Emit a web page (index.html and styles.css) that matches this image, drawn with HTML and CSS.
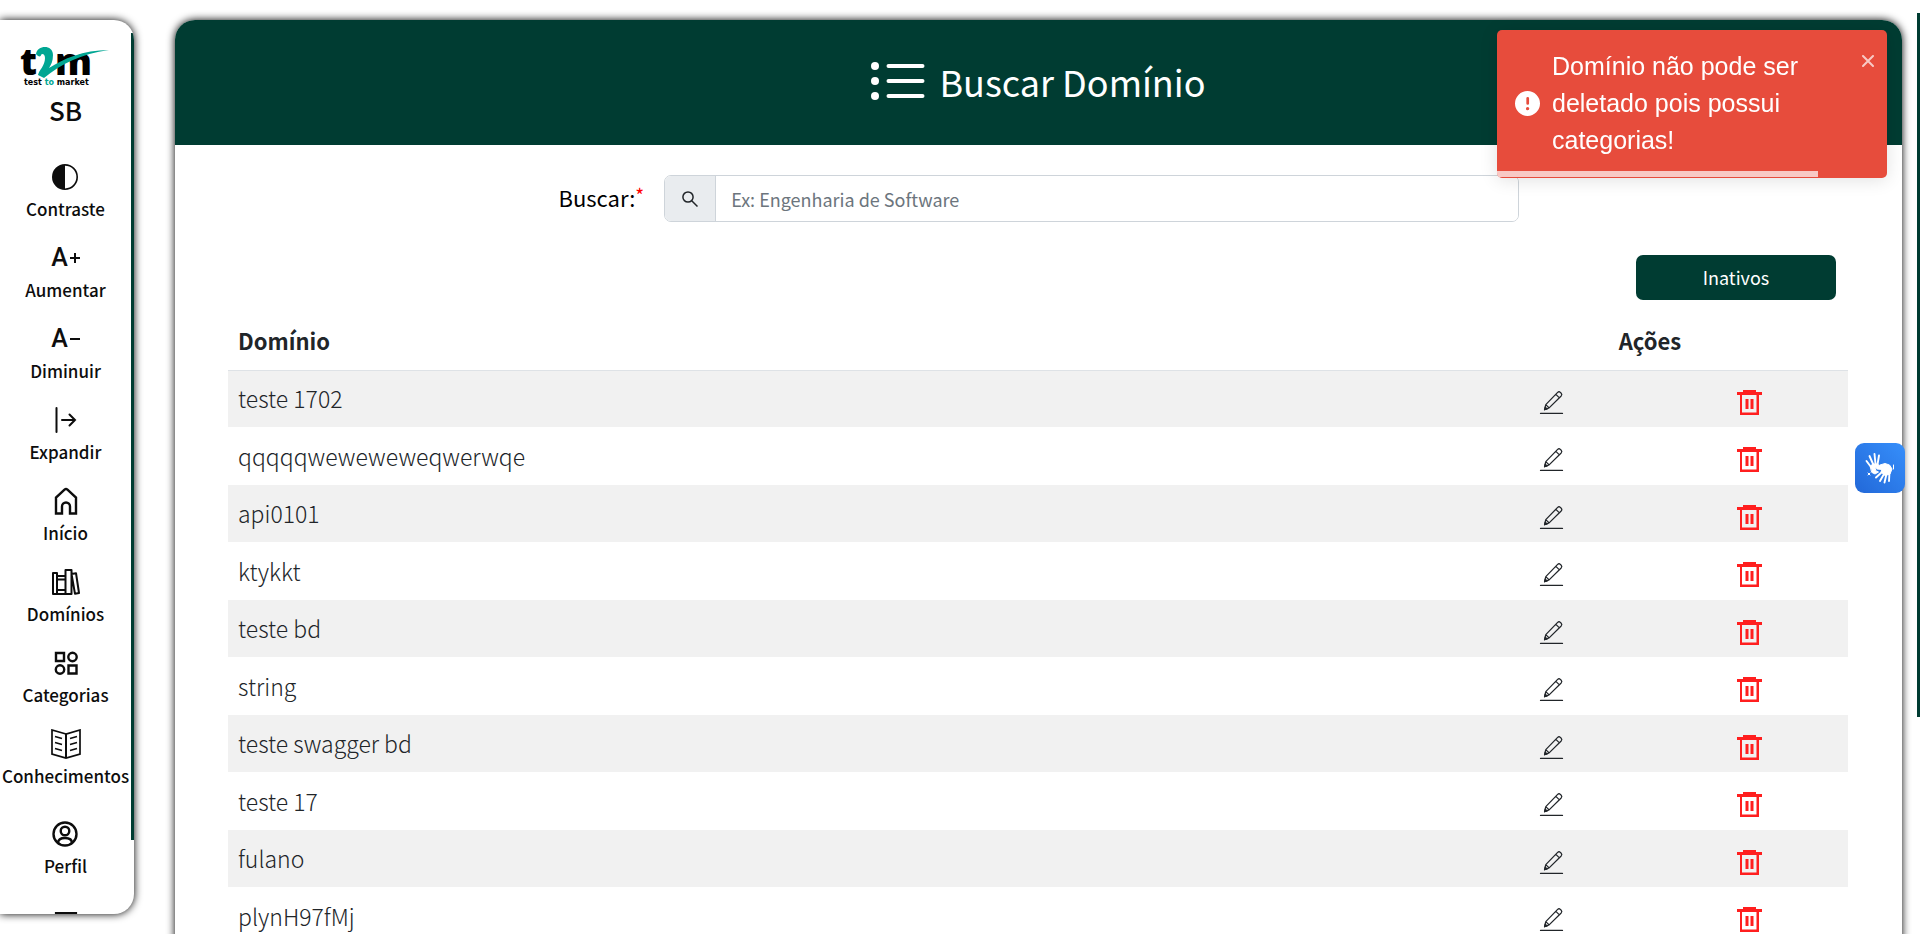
FILE: index.html
```html
<!DOCTYPE html>
<html lang="pt-BR">
<head>
<meta charset="utf-8">
<title>Buscar Domínio</title>
<link rel="stylesheet" href="styles.css">
</head>
<body>
<svg class="defs" aria-hidden="true">
  <symbol id="edit" viewBox="0 0 24 24" fill="none" stroke="currentColor" stroke-linecap="round" stroke-linejoin="round">
    <path d="M1.500 22.500h21" stroke-width="1.300"/>
    <path d="M5.300 19l1.200-5L17.900 2.300q1.300-1.200 2.600 0l.8.800q1.200 1.300 0 2.600L9.700 17.200zM16.200 4.200l3.400 3.400M6.500 14l3.200 3.200" stroke-width="1.200"/>
    <path d="M5.300 19l.6-2.700l2 2z" fill="currentColor"/>
  </symbol>
  <symbol id="trash" viewBox="0 0 25 25">
    <path d="M6 0h13v2h6v3h-3v20H3V5H0V2h6zM5 5v17.500h14.500V5zM8.500 9H11.500v10H8.500zM13.500 9h3v10h-3z" fill="currentColor" fill-rule="evenodd"/>
  </symbol>
</svg>
<div class="page">
  <nav class="sidebar">
    <a class="brand" href="#">
      <svg class="logo" viewBox="0 0 90 42" role="img" aria-label="t2m test to market">
        <text class="logo-letter" x="-1" y="29">t</text>
        <text class="logo-letter" x="34" y="29">m</text>
        <path d="M15 8C16-1 32-2 32 9C32 15 30 19 28 22C42 13 62 4 88 4C60 8 40 18 23 32L17 29C18 24 24 20 24 12C24 8 21 7 20 9C20 11 17 11 15 8Z" fill="#00a693"/>
        <text class="logo-sub" x="3" y="39">test <tspan class="logo-to">to</tspan> market</text>
      </svg>
    </a>
    <span class="initials">SB</span>
    <div class="menu">
      <button class="item" type="button">
        <svg class="icon" viewBox="0 0 16 16"><path fill="currentColor" d="M8 15A7 7 0 1 0 8 1zm0 1A8 8 0 1 1 8 0a8 8 0 0 1 0 16"/></svg>
        <span>Contraste</span></button>
      <button class="item" type="button">
        <span class="icon letter">A<svg viewBox="0 0 10 10" width="10" height="10"><path d="M0 5h10M5 0v10" stroke="currentColor" stroke-width="2"/></svg></span>
        <span>Aumentar</span></button>
      <button class="item" type="button">
        <span class="icon letter">A<svg viewBox="0 0 10 10" width="10" height="10"><path d="M0 5h10" stroke="currentColor" stroke-width="2"/></svg></span>
        <span>Diminuir</span></button>
      <button class="item" type="button">
        <svg class="icon" viewBox="0 0 26 26" fill="none" stroke="currentColor" stroke-width="2" stroke-linecap="round"><path d="M4.500 1v24" /><path d="M10 13h13M17.500 7.500L23 13l-5.500 5.500"/></svg>
        <span>Expandir</span></button>
      <a class="item" href="#">
        <svg class="icon tall" viewBox="0 0 26 28" fill="none" stroke="currentColor" stroke-width="2.400"><path d="M3 26.500V10.500L11.500 2.600q1.500-1.200 3 0L23 10.500V26.500h-6v-7a4 4 0 0 0-8 0V26.500z"/></svg>
        <span>Início</span></a>
      <a class="item" href="#">
        <svg class="icon wide" viewBox="0 0 28 26" fill="none" stroke="currentColor" stroke-width="2" stroke-linejoin="round"><path d="M1 4h4V25H1zM5 7h8.500v18H5zM5 10.500h8.500M5 21h8.500M13.500 1h6v24h-6zM19.500 5l4.500-.8L27 24l-4 .8z"/></svg>
        <span>Domínios</span></a>
      <a class="item" href="#">
        <svg class="icon" viewBox="0 0 26 26" fill="none" stroke="currentColor" stroke-width="2.400"><path d="M3 3h8v8H3zM15.500 15.500h8v8h-8z"/><circle cx="19.500" cy="7" r="4.200"/><circle cx="7" cy="19.500" r="4.200"/></svg>
        <span>Categorias</span></a>
      <a class="item" href="#">
        <svg class="icon book" viewBox="0 0 30 30" fill="none" stroke="currentColor" stroke-width="1.700"><path d="M15 5L1 1v24l14 4l14-4V1zM4 7.500l7 2M4 13.500l7 2M4 19.500l7 2M26 7.500l-7 2M26 13.500l-7 2M26 19.500l-7 2"/><path d="M15 5v24" stroke-width="2"/></svg>
        <span>Conhecimentos</span></a>
      <a class="item spaced" href="#">
        <svg class="icon" viewBox="0 0 26 26" fill="none" stroke="currentColor" stroke-width="2.400"><circle cx="13" cy="13" r="11.500"/><circle cx="13" cy="10" r="4.300"/><path d="M6 22q0-5 7-5t7 5"/></svg>
        <span>Perfil</span></a>
      <a class="item spaced" href="#" aria-label="Sair">
        <svg class="icon" viewBox="0 0 26 26" fill="none" stroke="currentColor" stroke-width="2.200"><path d="M23 9V2H3v22h20v-7M10 13h15"/></svg></a>
    </div>
    <div class="side-thumb"></div>
  </nav>

  <main class="card">
    <header class="card-header">
      <svg class="list-icon" viewBox="0 0 54 38" fill="none" stroke="currentColor" stroke-width="4" stroke-linecap="round"><path d="M17.500 4h34M17.500 19h34M17.500 34h34"/><g fill="currentColor" stroke="none"><circle cx="4" cy="4" r="4"/><circle cx="4" cy="19" r="4"/><circle cx="4" cy="34" r="4"/></g></svg>
      <h1>Buscar Domínio</h1>
    </header>
    <form class="search">
      <label for="q">Buscar:<span class="required">*</span></label>
      <div class="group">
        <span class="addon"><svg viewBox="0 0 16 16" width="16" height="16" fill="none" stroke="currentColor" stroke-width="1.500"><circle cx="6" cy="6" r="5.100"/><path d="M9.700 9.700L15.500 15.500"/></svg></span>
        <input id="q" type="text" placeholder="Ex: Engenharia de Software">
      </div>
    </form>
    <div class="toolbar"><button class="primary" type="button">Inativos</button></div>
    <table class="table">
      <thead><tr><th class="name">Domínio</th><th class="actions" colspan="2">Ações</th></tr></thead>
      <tbody id="rows"></tbody>
    </table>
  </main>
</div>

<div class="page-thumb"></div>
<button class="libras" type="button" aria-label="Acessível em Libras">
  <svg viewBox="0 0 30 32" width="30" height="32" fill="none" stroke="#fff" stroke-linecap="round" stroke-linejoin="round">
    <path d="M1.500 9L6 15M4.500 4l4 9M9.500 2l1 10M14 3.500l-1.500 9" stroke-width="1.900"/>
    <path d="M5.500 14.500l2-2.500h5.500l.5 2-3.500 2 1 3 2.500 1-3.500 2-3-1.500z" fill="#fff" stroke-width="1"/>
    <path d="M11 15.500l4-2.500 5-1.500 4.500 1.500 2.500 4-2 5-5 1.500-4-3.500 1-2.500-5-.5z" fill="#fff" stroke-width="1"/>
    <path d="M17 20l-6 5.500M19 22l-4 7M21.500 22l-2 8.500M24.500 20l-.5 9" stroke-width="1.900"/>
    <path d="M28.500 13v4M3 21l2 2M5 21l-2 2" stroke-width="1"/>
  </svg>
</button>
<div class="toast" role="alert">
  <svg class="toast-icon" viewBox="0 0 24 24" fill="currentColor"><path d="M12 0a12 12 0 1 0 12 12A12 12 0 0 0 12 0zm.2 18.500a1.600 1.600 0 1 1 1.500-1.600a1.500 1.500 0 0 1-1.500 1.600zm1.300-6.500a1.300 1.300 0 0 1-2.600 0V7a1.300 1.300 0 0 1 2.600 0z"/></svg>
  <p>Domínio não pode ser deletado pois possui categorias!</p>
  <button class="close" type="button" aria-label="Fechar"><svg viewBox="0 0 12 12" width="12" height="12"><path d="M1 1l10 10M11 1L1 11" stroke="currentColor" stroke-width="2" stroke-linecap="round"/></svg></button>
  <div class="progress"></div>
</div>
<script src="script.js"></script>
</body>
</html>
```
FILE: styles.css
```css
* { box-sizing: border-box; }
body {
  margin: 0;
  background: #fff;
  color: #212529;
  font-family: "Noto Sans CJK JP", "Noto Sans", sans-serif;
}
button, input { font: inherit; }
.defs { display: none; }
.page {
  display: flex;
  align-items: flex-start;
  gap: 41px;
  height: 100vh;
  padding: 20px 18px 0 0;
  overflow: hidden;
}
.sidebar {
  position: relative;
  display: flex;
  flex: none;
  flex-direction: column;
  align-items: center;
  width: 134px;
  height: calc(100vh - 40px);
  padding: 26px 3px 0 0;
  overflow: hidden;
  border-radius: 0 20px 20px 0;
  box-shadow: 0 0 8px #000;
  color: #0d0d0d;
}
.side-thumb {
  position: absolute;
  top: 13px;
  right: 0;
  bottom: 74px;
  width: 3px;
  background: #003c32;
}
.brand, .logo { display: block; }
.logo { width: 90px; height: 42px; overflow: visible; }
.logo-letter { font: 800 37px "Open Sans", sans-serif; fill: #000; }
.logo-sub { font: bold 8px "DejaVu Sans", sans-serif; fill: #000; }
.logo-to { fill: #00a693; }
.initials { font-size: 26px; font-weight: 500; line-height: 44px; }
.menu {
  display: flex;
  flex-direction: column;
  align-items: center;
  padding-top: 30px;
}
.item {
  display: flex;
  flex: none;
  flex-direction: column;
  align-items: center;
  gap: 2px;
  height: 81px;
  padding: 0;
  border: 0;
  background: none;
  color: inherit;
  font-size: 18px;
  font-weight: 500;
  line-height: 30px;
  text-decoration: none;
}
.item span:last-child { font-size: 17px; }
.spaced { margin-top: 9px; }
.icon { width: 26px; height: 30px; padding: 2px 0; }
.wide { width: 28px; }
.book { width: 30px; padding: 0; }
.tall { padding: 1px 0; }
.letter {
  display: flex;
  align-items: center;
  justify-content: center;
  gap: 2px;
  font: 500 25px/26px Roboto, sans-serif;
}
.letter svg { flex: none; }
.card {
  flex: 1;
  min-width: 0;
  min-height: 1300px;
  overflow: hidden;
  border-radius: 20px 20px 0 0;
  box-shadow: 0 0 8px #000;
}
.card-header {
  display: flex;
  align-items: center;
  justify-content: center;
  gap: 14px;
  height: 125px;
  padding-bottom: 3px;
  background: #003c32;
  color: #fff;
}
.list-icon { width: 54px; height: 38px; }
h1 { margin: 0; font-size: 36px; font-weight: 400; line-height: 56px; }
.search {
  display: flex;
  gap: 20px;
  width: 960px;
  margin: 30px auto 0;
}
.search label { color: #000; font-size: 22px; line-height: 44px; }
.required { color: red; font-size: 19px; vertical-align: top; line-height: 40px; }
.group {
  display: flex;
  flex: 1;
  height: 47px;
  overflow: hidden;
  border: 1px solid #ced4da;
  border-radius: 7px;
}
.addon {
  display: flex;
  align-items: center;
  justify-content: center;
  width: 51px;
  border-right: 1px solid #ced4da;
  background: #e9ecef;
}
.group input {
  flex: 1;
  min-width: 0;
  padding: 0 15px;
  border: 0;
  font-size: 18px;
}
.group input::placeholder { color: #6c757d; }
.toolbar { display: flex; justify-content: flex-end; padding: 33px 66px 0; }
.primary {
  width: 200px;
  height: 45px;
  padding: 0 0 2px;
  border: 0;
  border-radius: 7px;
  background: #003c32;
  color: #fff;
  font-size: 18px;
}
.table {
  width: calc(100% - 107px);
  margin: 13px auto 0 53px;
  table-layout: fixed;
  border-collapse: collapse;
  font-size: 23px;
  font-weight: 300;
  line-height: 36px;
}
.table th {
  height: 57px;
  padding: 0 10px 2px;
  border-bottom: 1px solid #dee2e6;
  font-size: 22px;
  font-weight: 700;
}
.table .name { text-align: left; }
.actions { width: 396px; }
.table td { height: 57px; padding: 0 10px 1px; }
.table tr:nth-child(even) td { height: 58px; }
.table tbody tr:nth-child(odd) { background: #f1f1f1; }
.table .action { padding: 0; text-align: center; }
.action button {
  display: inline-flex;
  padding: 0;
  border: 0;
  background: none;
  color: #212529;
  vertical-align: middle;
}
.action .delete { color: #ff1f1f; }
.action svg { width: 25px; height: 25px; }
.page-thumb {
  position: fixed;
  top: 13px;
  right: 0;
  width: 3px;
  height: 704px;
  background: #003c32;
}
.libras {
  position: fixed;
  top: 443px;
  right: 15px;
  display: flex;
  align-items: center;
  justify-content: center;
  width: 50px;
  height: 50px;
  padding: 0;
  border: 0;
  border-radius: 9px;
  background: linear-gradient(45deg, #2268d8, #368ffb);
}
.toast {
  position: fixed;
  top: 30px;
  right: 33px;
  display: flex;
  align-items: center;
  gap: 12px;
  width: 390px;
  min-height: 148px;
  padding: 17px 18px 19px;
  overflow: hidden;
  border-radius: 5px;
  background: #e74c3c;
  box-shadow: 0 2px 18px rgba(0, 0, 0, 0.12);
  color: #fff;
  font: 25px/37px "Liberation Sans", sans-serif;
}
.toast-icon { flex: none; width: 25px; height: 25px; }
.toast p { flex: 1; margin: 0; }
.close {
  align-self: flex-start;
  display: flex;
  margin: 8px -5px 0 0;
  padding: 0;
  border: 0;
  background: none;
  color: rgba(255, 255, 255, 0.7);
}
.progress {
  position: absolute;
  bottom: 1px;
  left: 0;
  width: 321px;
  height: 6px;
  background: rgba(255, 255, 255, 0.7);
}
```
FILE: script.js
```js
const names = ["teste 1702", "qqqqqweweweweqwerwqe", "api0101", "ktykkt", "teste bd", "string", "teste swagger bd", "teste 17", "fulano", "plynH97fMj"];
const body = document.getElementById("rows");
for (const name of names) {
  const row = body.insertRow();
  row.insertCell().textContent = name;
  for (const [icon, cls, label] of [["edit", "edit", "Editar"], ["trash", "delete", "Excluir"]]) {
    const cell = row.insertCell();
    cell.className = "action";
    cell.innerHTML = `<button class="${cls}" type="button" aria-label="${label} ${name}"><svg><use href="#${icon}"/></svg></button>`;
  }
}
```
